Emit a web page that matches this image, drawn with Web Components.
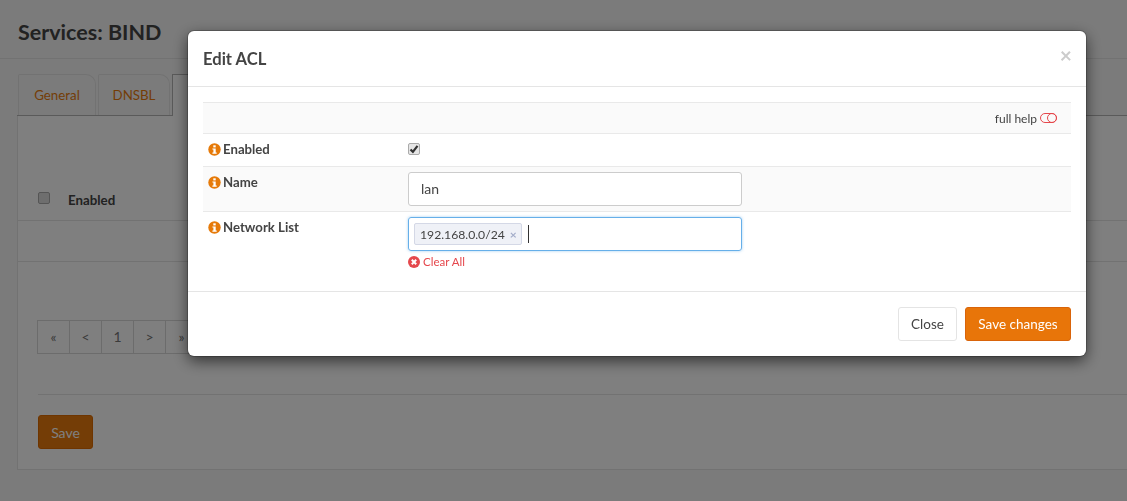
<!DOCTYPE html>
<html>
<head>
<meta charset="utf-8">
<title>Services: BIND</title>
<style>
  html, body { margin: 0; height: 100%; }
  body { font: 14px Lato, "Noto Sans", sans-serif; color: #444; background: #f7f7f7; overflow: hidden; }
</style>
</head>
<body>
<bind-page></bind-page>
<acl-modal></acl-modal>

<script>
const INFO_ICON = `<svg width="13" height="13" viewBox="0 0 13 13"><circle cx="6.5" cy="6.5" r="6.2" fill="#e67a09"/><rect x="5.3" y="2.3" width="2.4" height="2.1" fill="#fff"/><path d="M4.4 5.4h3.3v4.2h1v1.2H4.4V9.6h1V6.6h-1z" fill="#fff"/></svg>`;

class TabBar extends HTMLElement {
    constructor() {
        super();
        this.attachShadow({ mode: "open" });
        this.shadowRoot.innerHTML = `
            <style>
                :host { display: flex; gap: 2px; padding-left: 1px; height: 42px; box-sizing: border-box; border-bottom: 1px solid #b4b4b4; }
                a { box-sizing: border-box; height: 41px; padding-top: 11px; color: #e87b0c; font-size: 13.3px; line-height: 18px; text-align: center;
                    border: 1px solid #e4e4e4; border-bottom: 0; border-radius: 2px 10px 0 0; }
                a.general { width: 78px; }
                a.dnsbl { width: 72px; }
                a.active { width: 160px; height: 42px; background: #fff; border-color: #b4b4b4; border-radius: 0; color: #444; }
            </style>
            <a class="general">General</a><a class="dnsbl">DNSBL</a><a class="active">ACLs</a>
        `;
    }
}
customElements.define("tab-bar", TabBar);

class PagerBar extends HTMLElement {
    constructor() {
        super();
        this.attachShadow({ mode: "open" });
        this.shadowRoot.innerHTML = `
            <style>
                :host { display: inline-flex; height: 34px; }
                span { box-sizing: border-box; width: 33px; height: 34px; margin-left: -1px; border: 1px solid #d8d8d8; background: #fff;
                       color: #777; font-size: 14px; line-height: 32px; text-align: center; }
                span:first-child { margin-left: 0; border-radius: 4px 0 0 4px; }
            </style>
            <span>«</span><span>&lt;</span><span>1</span><span>&gt;</span><span>»</span>
        `;
    }
}
customElements.define("pager-bar", PagerBar);

class BindPage extends HTMLElement {
    constructor() {
        super();
        this.attachShadow({ mode: "open" });
        this.shadowRoot.innerHTML = `
            <style>
                :host { display: block; }
                header { height: 59px; box-sizing: border-box; padding: 18px 18px 0; border-bottom: 1px solid #e4e4e4; }
                h1 { margin: 0; font-size: 21.5px; line-height: 28px; font-weight: 700; color: #444; }
                .content { padding: 15px 0 0 17px; }
                .panel { height: 354px; background: #fff; border: 1px solid #e4e4e4; border-width: 0 0 1px 1px; box-sizing: border-box; display: flex; flex-direction: column; }
                .head { height: 105px; box-sizing: border-box; padding: 76px 0 0 20px; border-bottom: 1px solid #e4e4e4; display: flex; align-items: flex-start; gap: 18px; }
                .check { box-sizing: border-box; width: 12px; height: 12px; border: 1px solid #aaa; border-radius: 2px; background: #ddd; }
                .head b { font-size: 13.3px; line-height: 18px; color: #444; margin-top: -1px; }
                .gap { height: 41px; box-sizing: border-box; border-bottom: 1px solid #e4e4e4; }
                .pager { padding: 58px 0 0 20px; height: 132px; box-sizing: border-box; }
                .foot { margin: 0 0 0 20px; padding-top: 20px; border-top: 1px solid #e4e4e4; }
                button { display: block; width: 55px; height: 34px; background: #e87b0c; border: 1px solid #dd6a00; border-radius: 3px; color: #fff; font: 14px Lato, sans-serif; padding: 0; }
            </style>
            <header><h1>Services: BIND</h1></header>
            <div class="content">
                <tab-bar></tab-bar>
                <div class="panel">
                    <div class="head"><div class="check"></div><b>Enabled</b></div>
                    <div class="gap"></div>
                    <div class="pager"><pager-bar></pager-bar></div>
                    <div class="foot"><button>Save</button></div>
                </div>
            </div>
        `;
    }
}
customElements.define("bind-page", BindPage);

class AclRow extends HTMLElement {
    static get observedAttributes() {
        return ["label"];
    }

    constructor() {
        super();
        this.attachShadow({ mode: "open" });
        this.render();
    }

    attributeChangedCallback() {
        this.render();
    }

    render() {
        const label = this.getAttribute("label") || "";
        this.shadowRoot.innerHTML = `
            <style>
                :host { display: grid; grid-template-columns: 205px 1fr; box-sizing: border-box; border-bottom: 1px solid #e9e9e9; }
                :host([striped]) { background: #fafafa; }
                :host([last]) { border-bottom: 0; }
                .label { display: flex; align-items: flex-start; gap: 2px; padding: 6px 0 0 5px; font-weight: 700; font-size: 13.2px; line-height: 18px; color: #444; }
                svg { flex: none; margin-top: 3px; }
                .value { padding: 5px 0 0; }
            </style>
            <div class="label">${INFO_ICON}<span>${label}</span></div>
            <div class="value"><slot></slot></div>
        `;
    }
}
customElements.define("acl-row", AclRow);

class TagInput extends HTMLElement {
    constructor() {
        super();
        this.attachShadow({ mode: "open" });
        this.shadowRoot.innerHTML = `
            <style>
                :host { display: block; }
                .box { box-sizing: border-box; width: 334px; height: 34px; border: 1px solid #66afe9; border-radius: 3px; box-shadow: 0 0 3px rgba(102,175,233,.6);
                       display: flex; align-items: center; padding-left: 5px; }
                .tag { box-sizing: border-box; height: 22px; padding: 0 4px 0 5px; display: flex; align-items: center; gap: 5px; background: #eff1f7; border: 1px solid #d4d8e6; border-radius: 2px; font-size: 12.2px; color: #444; }
                .tag i { font-style: normal; color: #a3acc9; font-size: 12px; font-weight: 700; }
                .caret { width: 1px; height: 18px; background: #333; margin-left: 6px; }
                .clear { display: flex; align-items: center; gap: 3px; margin-top: 4px; color: #e5484d; font-size: 11.5px; line-height: 14px; }
            </style>
            <div class="box">
                <span class="tag">192.168.0.0/24 <i>×</i></span>
                <span class="caret"></span>
            </div>
            <div class="clear">
                <svg width="12" height="12" viewBox="0 0 12 12"><circle cx="6" cy="6" r="6" fill="#e5484d"/><path d="M3.8 3.8l4.4 4.4M8.2 3.8l-4.4 4.4" stroke="#fff" stroke-width="2"/></svg>
                Clear All
            </div>
        `;
    }
}
customElements.define("tag-input", TagInput);

class AclModal extends HTMLElement {
    constructor() {
        super();
        this.attachShadow({ mode: "open" });
        this.shadowRoot.innerHTML = `
            <style>
                :host { position: fixed; inset: 0; background: rgba(0,0,0,.5); box-sizing: border-box; padding: 31px 41px 0 188px; }
                .dialog { height: 325px; background: #fff; border-radius: 6px; box-shadow: 0 0 0 1px rgba(0,0,0,.2), 0 5px 15px rgba(0,0,0,.6); display: flex; flex-direction: column; }
                .top { height: 56px; box-sizing: border-box; border-bottom: 1px solid #e5e5e5; padding: 17px 14px 0 15px; display: flex; justify-content: space-between; }
                h4 { margin: 0; font-size: 16.6px; line-height: 22px; font-weight: 700; color: #444; }
                .x { font-size: 21px; line-height: 14px; font-weight: 700; color: #ccc; }
                .body { height: 205px; box-sizing: border-box; padding: 15px 15px 0; border-bottom: 1px solid #e5e5e5; }
                .help { height: 32px; box-sizing: border-box; border: solid #e9e9e9; border-width: 1px 0; background: #fafafa; display: flex; justify-content: flex-end; align-items: center; gap: 3px; padding-right: 14px; font-size: 12px; color: #444; }
                .enabled { height: 33px; }
                .name { height: 45px; }
                .net { height: 60px; }
                .cb { box-sizing: border-box; width: 12px; height: 12px; margin-top: 4px; border: 1px solid #aaa; border-radius: 2px; background: #e6e6e6; display: flex; }
                .field { box-sizing: border-box; width: 334px; height: 34px; border: 1px solid #ccc; border-radius: 3px; padding: 0 12px; font-size: 14px; line-height: 32px; color: #444; background: #fff; }
                .foot { flex: 1; display: flex; justify-content: flex-end; align-items: flex-start; gap: 8px; padding: 15px 15px 0; }
                button { height: 34px; box-sizing: border-box; padding: 0; border-radius: 3px; font: 13.5px Lato, sans-serif; }
                .close { width: 59px; background: #fff; border: 1px solid #e4e4e4; color: #444; }
                .save { width: 106px; background: #e87509; border: 1px solid #d9640a; color: #fff; }
            </style>
            <div class="dialog">
                <div class="top"><h4>Edit ACL</h4><span class="x">×</span></div>
                <div class="body">
                    <div class="help">full help
                        <svg width="17" height="10" viewBox="0 0 17 10"><rect x=".5" y=".5" width="16" height="9" rx="4.5" fill="none" stroke="#e5484d"/><circle cx="12" cy="5" r="4.5" fill="none" stroke="#e5484d"/></svg>
                    </div>
                    <acl-row class="enabled" label="Enabled">
                        <div class="cb"><svg width="10" height="10" viewBox="0 0 10 10"><path d="M1.5 5.5l2.4 2.4 4.6-6" fill="none" stroke="#333" stroke-width="2.2"/></svg></div>
                    </acl-row>
                    <acl-row class="name" label="Name" striped><div class="field">lan</div></acl-row>
                    <acl-row class="net" label="Network List" last><tag-input></tag-input></acl-row>
                </div>
                <div class="foot"><button class="close">Close</button><button class="save">Save changes</button></div>
            </div>
        `;
    }
}
customElements.define("acl-modal", AclModal);
</script>
</body>
</html>
